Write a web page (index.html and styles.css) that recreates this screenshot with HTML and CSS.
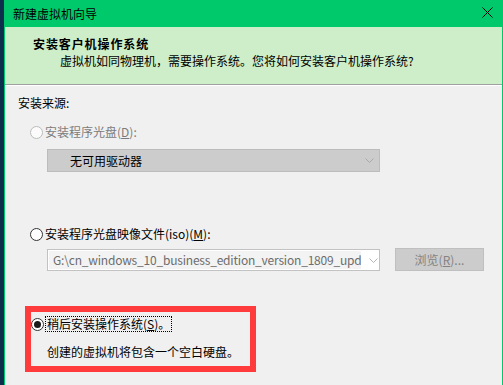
FILE: index.html
```html
<!DOCTYPE html>
<html lang="zh-CN">
<head>
<meta charset="utf-8">
<title>新建虚拟机向导</title>
<link rel="stylesheet" href="styles.css">
</head>
<body>
<div class="screen">
  <div class="desk"></div>
  <div class="window">
    <div class="titlebar">
      <span class="title">新建虚拟机向导</span>
      <svg class="close" width="11" height="11" viewBox="0 0 11 11"><path d="M0.5 0.5L10.5 10.5M10.5 0.5L0.5 10.5" stroke="#000" stroke-width="1" fill="none"/></svg>
    </div>
    <div class="header">
      <div class="h-title">安装客户机操作系统</div>
      <div class="h-sub">虚拟机如同物理机，需要操作系统。您将如何安装客户机操作系统?</div>
    </div>
    <div class="content">
      <div class="label">安装来源:</div>
      <div class="option disabled"><span class="radio"></span><span>安装程序光盘(<u>D</u>):</span></div>
      <div class="select">
        <span class="select-text">无可用驱动器</span>
        <svg class="chev" width="9" height="5" viewBox="0 0 9 5"><path d="M0.5 0.5L4.5 4.5L8.5 0.5" stroke="#a8a8a8" stroke-width="1" fill="none"/></svg>
      </div>
      <div class="option second"><span class="radio"></span><span>安装程序光盘映像文件(iso)(<u>M</u>):</span></div>
      <div class="iso-row">
        <div class="combo">
          <span class="path">G:\cn_windows_10_business_edition_version_1809_upd</span>
          <svg class="chev" width="9" height="5" viewBox="0 0 9 5"><path d="M0.5 0.5L4.5 4.5L8.5 0.5" stroke="#b4b4b4" stroke-width="1" fill="none"/></svg>
        </div>
        <div class="button">浏览(<u>R</u>)...</div>
      </div>
      <div class="highlight">
        <div class="option checked"><span class="radio"></span><span class="focus">稍后安装操作系统(<u>S</u>)。</span></div>
        <div class="note">创建的虚拟机将包含一个空白硬盘。</div>
      </div>
    </div>
  </div>
</div>
</body>
</html>
```

FILE: styles.css
```css
* { box-sizing: border-box; }
html, body {
  margin: 0;
  padding: 0;
}
body {
  font-family: "Noto Sans CJK SC", "Noto Sans", sans-serif;
  font-size: 12px;
  line-height: 16px;
  color: #000;
  background: #0b2f4c;
}
.screen {
  display: flex;
  width: 503px;
  height: 385px;
  overflow: hidden;
}
.desk {
  width: 4px;
  flex: none;
  background: #0b2f4c;
}
.window {
  flex: 1;
  display: flex;
  flex-direction: column;
  border-left: 1px solid #00c96b;
  border-right: 1px solid #00c96b;
  background: #f0f0f0;
  overflow: hidden;
}
.titlebar {
  height: 27px;
  flex: none;
  background: #00c96b;
  display: flex;
  align-items: center;
  justify-content: space-between;
  padding-left: 8px;
}
.close {
  align-self: flex-start;
  margin-top: 7px;
  margin-right: 9px;
}
.header {
  height: 58px;
  flex: none;
  background: #cdeec9;
  border-bottom: 1px solid #a0a0a0;
  padding: 9px 0 0 28px;
}
.h-title {
  font-weight: bold;
  letter-spacing: 0.9px;
}
.h-sub {
  margin-top: 1px;
  padding-left: 27px;
}
.content {
  flex: 1;
  border-top: 1px solid #ffffff;
  padding: 9px 0 0 13px;
}
.option {
  display: flex;
  align-items: center;
  gap: 2px;
  height: 16px;
  margin-top: 13px;
  padding-left: 12px;
}
.option.second {
  margin-top: 54px;
}
.radio {
  width: 13px;
  height: 13px;
  flex: none;
  border: 1px solid #333333;
  border-radius: 50%;
  background: #ffffff;
  display: flex;
  align-items: center;
  justify-content: center;
}
.disabled {
  color: #7c7c7c;
}
.disabled .radio {
  border-color: #bcbcbc;
  background: #fbfbfb;
}
.select {
  margin: 9px 0 0 29px;
  width: 333px;
  height: 23px;
  background: #cccccc;
  border: 1px solid #bcbcbc;
  display: flex;
  align-items: center;
  justify-content: space-between;
  padding: 0 5px 0 22px;
}
.chev {
  flex: none;
}
.iso-row {
  display: flex;
  align-items: flex-start;
  margin: 6px 0 0 29px;
}
.combo {
  width: 333px;
  height: 22px;
  margin-top: 1px;
  border: 1px solid #c2c2c2;
  background: #ffffff;
  display: flex;
  align-items: center;
  padding: 1px 5px 1px 1px;
}
.path {
  flex: none;
  width: 312px;
  height: 18px;
  line-height: 18px;
  background: #f3f3f3;
  color: #6d6d6d;
  white-space: nowrap;
  overflow: hidden;
  padding-left: 4px;
  margin-right: 8px;
  letter-spacing: -0.2px;
}
.button {
  margin-left: 15px;
  width: 89px;
  height: 23px;
  background: #cccccc;
  border: 1px solid #bfbfbf;
  color: #838383;
  display: flex;
  align-items: center;
  justify-content: center;
}
.highlight {
  margin: 35px 0 0 7px;
  width: 231px;
  height: 66px;
  border: 6px solid #ff3b3b;
  padding-top: 4px;
}
.highlight .option {
  margin-top: 0;
  padding-left: 0;
  gap: 1px;
}
.checked .radio::after {
  content: "";
  width: 7px;
  height: 7px;
  border-radius: 50%;
  background: #1a1a1a;
}
.focus {
  border: 1px dotted #000;
  line-height: 14px;
  padding: 0 1px;
}
.note {
  margin: 12px 0 0 16px;
}
```
